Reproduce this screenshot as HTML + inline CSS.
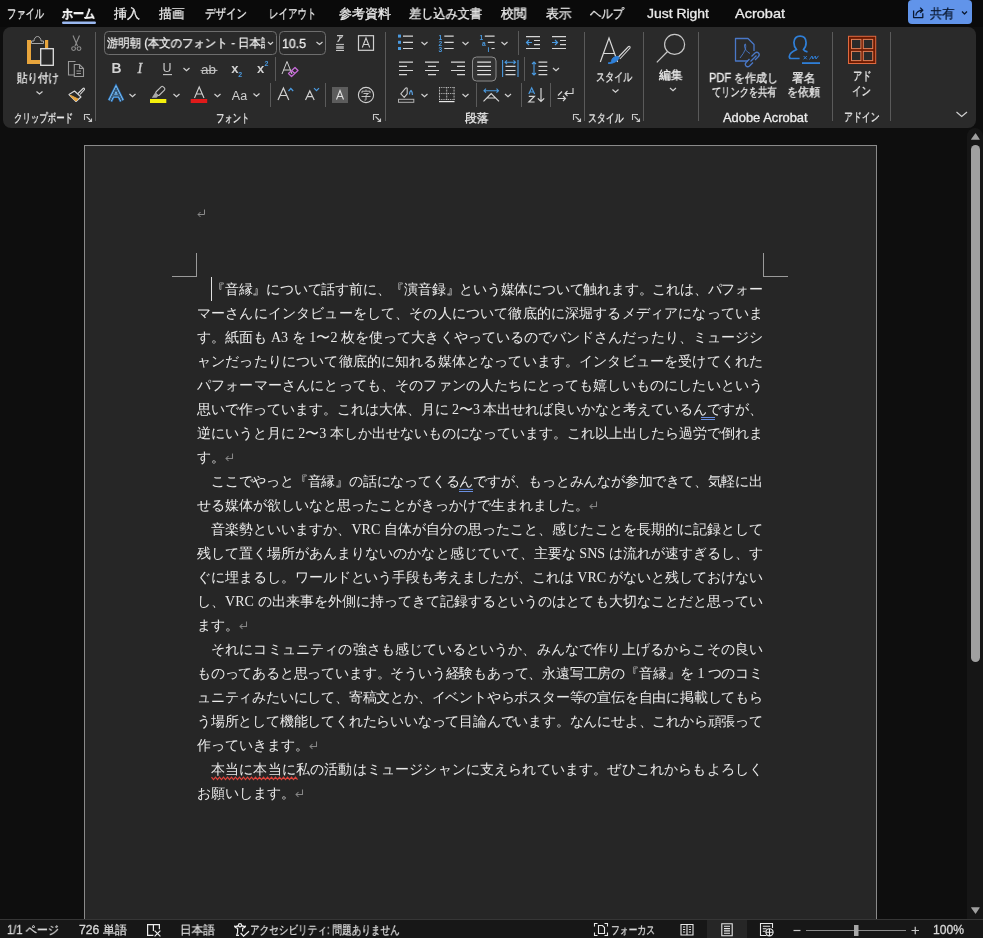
<!DOCTYPE html>
<html><head><meta charset="utf-8">
<style>
*{box-sizing:border-box}
html,body{margin:0;padding:0}
body{width:983px;height:938px;overflow:hidden;background:#0e0e0e;position:relative;font-family:"Liberation Sans",sans-serif;color:#e8e8e8}
.abs{position:absolute}
#tabs{left:0;top:0;width:983px;height:27px;background:#0a0a0a}
.tab{position:absolute;top:5px;font-size:13px;line-height:16px;color:#e6e6e6;white-space:nowrap}
#ribbon{left:3px;top:27px;width:973px;height:101px;background:#2a2a2a;border-radius:8px}
#page{left:84px;top:145px;width:793px;height:800px;background:#262626;border:1px solid #8a8a8a}
#sb{left:967px;top:128px;width:16px;height:791px;background:#161616;border-radius:8px 8px 0 0}
#status{left:0;top:919px;width:983px;height:19px;background:#171717;border-top:1px solid #363636}
.ln{will-change:transform;position:absolute;height:24px;line-height:24px;font-family:"Liberation Serif",serif;font-size:14px;color:#eaeaea;white-space:nowrap;}

.rm{display:inline-block;vertical-align:baseline;margin-left:0}
.t{will-change:transform;position:absolute;white-space:nowrap;transform-origin:0 0;color:#ececec;-webkit-text-stroke:0.3px currentColor}
#share{left:908px;top:0px;width:64px;height:24px;background:#6194ea;border-radius:4px}

</style></head><body>
<div id="tabs" class="abs"></div>
<div id="share" class="abs"></div>
<div id="ribbon" class="abs"></div>
<div id="page" class="abs"></div>
<div class="abs" style="left:172px;top:276px;width:25px;height:1px;background:#9a9a9a"></div>
<div class="abs" style="left:196px;top:253px;width:1px;height:24px;background:#9a9a9a"></div>
<div class="abs" style="left:763px;top:276px;width:25px;height:1px;background:#9a9a9a"></div>
<div class="abs" style="left:763px;top:253px;width:1px;height:24px;background:#9a9a9a"></div>
<svg class="abs" style="left:197px;top:209px" width="9" height="9" viewBox="0 0 9 9"><path d="M7.5 0.5V5.5H1M3.5 3L1 5.5L3.5 8" fill="none" stroke="#8a8a8a" stroke-width="1"/></svg>
<div class="abs" style="left:211px;top:277px;width:1px;height:24px;background:#e0e0e0"></div>
<div class="ln" style="top:277.5px;left:211px;letter-spacing:-0.2051px;width:551.80px;text-align:justify;text-align-last:justify">『音縁』について話す前に、『演音録』という媒体について触れます。これは、パフォー</div>
<div class="ln" style="top:301.5px;left:197px;letter-spacing:0.1538px;width:566.16px;text-align:justify;text-align-last:justify">マーさんにインタビューをして、その人について徹底的に深堀するメディアになっていま</div>
<div class="ln" style="top:325.5px;left:197px;letter-spacing:0.0653px;width:566.08px;text-align:justify;text-align-last:justify">す。紙面も A3 を 1〜2 枚を使って大きくやっているのでバンドさんだったり、ミュージシ</div>
<div class="ln" style="top:349.5px;left:197px;letter-spacing:0.1538px;width:566.16px;text-align:justify;text-align-last:justify">ャンだったりについて徹底的に知れる媒体となっています。インタビューを受けてくれた</div>
<div class="ln" style="top:373.5px;left:197px;letter-spacing:0.1538px;width:566.16px;text-align:justify;text-align-last:justify">パフォーマーさんにとっても、そのファンの人たちにとっても嬉しいものにしたいという</div>
<div class="ln" style="top:397.5px;left:197px;letter-spacing:-0.0238px;width:565.99px;text-align:justify;text-align-last:justify">思いで作っています。これは大体、月に 2〜3 本出せれば良いかなと考えているんですが、</div>
<div class="ln" style="top:421.5px;left:197px;letter-spacing:-0.0238px;width:565.99px;text-align:justify;text-align-last:justify">逆にいうと月に 2〜3 本しか出せないものになっています。これ以上出したら過労で倒れま</div>
<div class="ln" style="top:445.5px;left:197px">す。<svg class="rm" width="9" height="9" viewBox="0 0 9 9"><path d="M7.5 0.5V5.5H1M3.5 3L1 5.5L3.5 8" fill="none" stroke="#868686" stroke-width="1.05"/></svg></div>
<div class="ln" style="top:469.5px;left:211px;letter-spacing:-0.2051px;width:551.80px;text-align:justify;text-align-last:justify">ここでやっと『音縁』の話になってくるんですが、もっとみんなが参加できて、気軽に出</div>
<div class="ln" style="top:493.5px;left:197px">せる媒体が欲しいなと思ったことがきっかけで生まれました。<svg class="rm" width="9" height="9" viewBox="0 0 9 9"><path d="M7.5 0.5V5.5H1M3.5 3L1 5.5L3.5 8" fill="none" stroke="#868686" stroke-width="1.05"/></svg></div>
<div class="ln" style="top:517.5px;left:211px;letter-spacing:0.0426px;width:552.05px;text-align:justify;text-align-last:justify">音楽勢といいますか、VRC 自体が自分の思ったこと、感じたことを長期的に記録として</div>
<div class="ln" style="top:541.5px;left:197px;letter-spacing:0.0312px;width:566.04px;text-align:justify;text-align-last:justify">残して置く場所があんまりないのかなと感じていて、主要な SNS は流れが速すぎるし、す</div>
<div class="ln" style="top:565.5px;left:197px;letter-spacing:-0.0428px;width:565.97px;text-align:justify;text-align-last:justify">ぐに埋まるし。ワールドという手段も考えましたが、これは VRC がないと残しておけない</div>
<div class="ln" style="top:589.5px;left:197px;letter-spacing:0.0415px;width:566.05px;text-align:justify;text-align-last:justify">し、VRC の出来事を外側に持ってきて記録するというのはとても大切なことだと思ってい</div>
<div class="ln" style="top:613.5px;left:197px">ます。<svg class="rm" width="9" height="9" viewBox="0 0 9 9"><path d="M7.5 0.5V5.5H1M3.5 3L1 5.5L3.5 8" fill="none" stroke="#868686" stroke-width="1.05"/></svg></div>
<div class="ln" style="top:637.5px;left:211px;letter-spacing:0.1579px;width:552.17px;text-align:justify;text-align-last:justify">それにコミュニティの強さも感じているというか、みんなで作り上げるからこその良い</div>
<div class="ln" style="top:661.5px;left:197px;letter-spacing:-0.1905px;width:565.82px;text-align:justify;text-align-last:justify">ものってあると思っています。そういう経験もあって、永遠写工房の『音縁』を 1 つのコミ</div>
<div class="ln" style="top:685.5px;left:197px;letter-spacing:-0.2000px;width:565.81px;text-align:justify;text-align-last:justify">ュニティみたいにして、寄稿文とか、イベントやらポスター等の宣伝を自由に掲載してもら</div>
<div class="ln" style="top:709.5px;left:197px;letter-spacing:-0.2000px;width:565.81px;text-align:justify;text-align-last:justify">う場所として機能してくれたらいいなって目論んでいます。なんにせよ、これから頑張って</div>
<div class="ln" style="top:733.5px;left:197px">作っていきます。<svg class="rm" width="9" height="9" viewBox="0 0 9 9"><path d="M7.5 0.5V5.5H1M3.5 3L1 5.5L3.5 8" fill="none" stroke="#868686" stroke-width="1.05"/></svg></div>
<div class="ln" style="top:757.5px;left:211px;letter-spacing:0.1579px;width:552.17px;text-align:justify;text-align-last:justify">本当に本当に私の活動はミュージシャンに支えられています。ぜひこれからもよろしく</div>
<div class="ln" style="top:781.5px;left:197px">お願いします。<svg class="rm" width="9" height="9" viewBox="0 0 9 9"><path d="M7.5 0.5V5.5H1M3.5 3L1 5.5L3.5 8" fill="none" stroke="#868686" stroke-width="1.05"/></svg></div>
<svg class="abs" style="left:0;top:0" width="983" height="938" viewBox="0 0 983 938"><g fill="none">
<path d="M701 417.5H715M701 419.5H715M459 489.4H473M459 491.5H473" stroke="#6a8fe0" stroke-width="1"/>
<path d="M211.5 777.2L213.5 779.6L215.5 777.2L217.5 779.6L219.5 777.2L221.5 779.6L223.5 777.2L225.5 779.6L227.5 777.2L229.5 779.6L231.5 777.2L233.5 779.6L235.5 777.2L237.5 779.6L239.5 777.2L241.5 779.6L243.5 777.2L245.5 779.6L247.5 777.2L249.5 779.6L251.5 777.2L253.5 779.6L255.5 777.2L257.5 779.6L259.5 777.2L261.5 779.6L263.5 777.2L265.5 779.6L267.5 777.2L269.5 779.6L271.5 777.2L273.5 779.6L275.5 777.2L277.5 779.6L279.5 777.2L281.5 779.6L283.5 777.2L285.5 779.6L287.5 777.2L289.5 779.6L291.5 777.2L293.5 779.6L295.5 777.2L297.5 779.6" stroke="#e0443c" stroke-width="1.25"/>
</g></svg>
<div id="sb" class="abs"></div>
<div id="status" class="abs"></div>
<svg class="abs" style="left:0;top:0" width="983" height="938" viewBox="0 0 983 938">
<g fill="none" stroke-linecap="butt">
<!-- separators -->
<g stroke="#5a5a5a" stroke-width="1">
<path d="M95.5 32V121M385.5 32V121M584.5 32V121M643.5 32V121M698.5 32V121M832.5 32V121M890.5 32V121"/>
<path d="M275.5 57V81M270.5 83V107M325.5 83V107M518.5 31V55M524.5 57V81M476.5 83V107M521.5 83V107M550.5 83V107"/>
</g>
<!-- share button icon and chevron -->
<g stroke="#0a1830" stroke-width="1.25" stroke-linejoin="round">
<path d="M913.6 10.4V17.6H922.8V13.2"/>
<path d="M915.8 15.6Q916.4 10.6 922.6 10.2M920.2 7.6L922.8 10.2L920.2 12.8"/>
<path d="M962 11.5L964.5 14L967 11.5"/>
</g>
<!-- Paste -->
<path d="M27 40H31V43.5H31V60H40V64H27Z M45 40H48.2V48H45Z" fill="#e8a53c" stroke="none"/>
<path d="M31.5 43.5H43.5V41H41C41 38.5 39.5 36.5 37.5 36.5S34 38.5 34 41H31.5Z" stroke="#a8a8a8" stroke-width="1"/>
<rect x="40.7" y="48.7" width="12.6" height="16.6" fill="#2a2a2a" stroke="#e2e2e2" stroke-width="1.3"/>
<path d="M36.5 91.5L39.5 94L42.5 91.5" stroke="#d0d0d0" stroke-width="1.2"/>
<!-- scissors -->
<g stroke="#8e8e8e" stroke-width="1.1">
<path d="M73 35.5L77.5 46M79.5 35.5L75 46"/>
<circle cx="73.6" cy="48.6" r="1.9"/><circle cx="79" cy="48.6" r="1.9"/>
</g>
<!-- copy -->
<g stroke="#9a9a9a" stroke-width="1.1">
<path d="M75.5 61.5H68.5V75H74"/>
<path d="M74.3 64.5H79.5L83.5 68.5V76.5H74.3Z M79.5 64.5V68.5H83.5 M76.5 71H81M76.5 73.5H81"/>
</g>
<!-- format painter -->
<path d="M69 94.5L74.5 91L81 97L76 101.5Z" stroke="#d8d8d8" stroke-width="1.1" stroke-linejoin="round"/>
<path d="M70 95.5L76 101L78 99L72 96Z" fill="#e8a53c" stroke="#e8a53c" stroke-width="1"/>
<path d="M78 93.5L83 88.5Q84.5 87.5 84.5 89.5L80 94.5" stroke="#d8d8d8" stroke-width="1.1"/>
<!-- launchers -->
<g stroke="#c8c8c8" stroke-width="1.1">
<path d="M84.5 120V114.5H90M86.5 116.5L91.5 121.5M88.5 121.5H91.5V118.5"/>
<path d="M373.5 120V114.5H379M375.5 116.5L380.5 121.5M377.5 121.5H380.5V118.5"/>
<path d="M573.5 120V114.5H579M575.5 116.5L580.5 121.5M577.5 121.5H580.5V118.5"/>
<path d="M632.5 120V114.5H638M634.5 116.5L639.5 121.5M636.5 121.5H639.5V118.5"/>
</g>
<!-- font boxes -->
<rect x="104.5" y="31.5" width="172" height="23" rx="4" stroke="#6e6e6e" stroke-width="1"/>
<rect x="279.5" y="31.5" width="46" height="23" rx="4" stroke="#6e6e6e" stroke-width="1"/>
<!-- chevrons -->
<g stroke="#d0d0d0" stroke-width="1.2">
<path d="M268 42L270.5 44.5L273 42M316.5 42L319.5 44.5L322.5 42"/>
<path d="M183.5 68L186.5 70.8L189.5 68"/>
<path d="M129.5 94L132.5 96.8L135.5 94M173.5 94L176.5 96.8L179.5 94M214.5 94L217.5 96.8L220.5 94M253.5 93.5L256.5 96.3L259.5 93.5"/>
<path d="M421.5 42L424.5 44.8L427.5 42M462.5 42L465.5 44.8L468.5 42M501.5 42L504.5 44.8L507.5 42M553 68L556 70.8L559 68"/>
<path d="M421.5 94L424.5 96.8L427.5 94M462.5 94L465.5 96.8L468.5 94M505 94L508 96.8L511 94"/>
<path d="M612.5 89.5L615.5 92.3L618.5 89.5M670 88L673 90.8L676 88"/>
<path d="M956.5 112L961.7 116.5L967 112"/>
</g>
<!-- ruby icon -->
<g stroke="#c8c8c8" stroke-width="1.1">
<path d="M337 35.6H342.6Q342 37.5 340.4 38.3M340 36.5Q340.2 40 337.5 41.8"/>
<path d="M336 44.4H344M336 50.5H344" stroke-width="1"/>
</g>
<rect x="336.2" y="45.9" width="7.6" height="3.2" fill="#9a9a9a" stroke="none"/>
<!-- enclosed A -->
<rect x="358.5" y="35.7" width="15" height="14.6" stroke="#d0d0d0" stroke-width="1.2"/>
<path d="M362.3 47.5L366 38L369.7 47.5M363.5 44.5H368.5" stroke="#d0d0d0" stroke-width="1.1"/>
<!-- U underline -->
<path d="M163 74.6H172" stroke="#c8c8c8" stroke-width="1.1"/>
<!-- strikethrough -->
<path d="M200.5 70.4H217.5" stroke="#c8c8c8" stroke-width="1"/>
<!-- clear formatting -->
<path d="M282 74L287 61.5L292 74M283.5 70H290.5" stroke="#d0d0d0" stroke-width="1"/>
<path d="M288.5 73.5L295 67.5L298 70.5L291.5 76.5Z M291.7 70.5L294.7 73.5" stroke="#c56bd6" stroke-width="1.3" stroke-linejoin="round"/>
<!-- text effects A -->
<g stroke-linejoin="miter" stroke-linecap="butt">
<path d="M110 100.8L116 88.8L122 100.8M112.8 95.6H119.2" stroke="#2a78c8" stroke-width="5"/>
<path d="M110 100.8L116 88.8L122 100.8M112.8 95.6H119.2" stroke="#86c4f2" stroke-width="3.4"/>
<path d="M110 100.8L116 88.8L122 100.8M112.8 95.6H119.2" stroke="#0c2846" stroke-width="1.6"/>
<path d="M110 100.8L116 88.8L122 100.8M112.8 95.6H119.2" stroke="#8cbce6" stroke-width="0.4"/>
</g>
<!-- highlighter -->
<rect x="155.3" y="88.6" width="10" height="4.6" rx="1.5" transform="rotate(-45 160.3 90.9)" stroke="#c0c0c0" stroke-width="1.1"/>
<path d="M155.2 92.6L158.4 95.8L156.5 97.8H151.8Z" fill="#a8a8a8" stroke="none"/>
<rect x="150" y="99" width="16.3" height="4" fill="#f4f00c" stroke="none"/>
<!-- font color -->
<path d="M194.5 98L199.2 87L204 98M196.2 94H202.3" stroke="#d0d0d0" stroke-width="1.1"/>
<rect x="190.7" y="99" width="16.5" height="4" fill="#e01a1a" stroke="none"/>
<!-- A^ A v -->
<path d="M278 100L283.4 88L288.8 100M280 95.5H286.8" stroke="#d0d0d0" stroke-width="1.2"/>
<path d="M288.5 91L290.8 88.5L293.2 91" stroke="#4a9ae0" stroke-width="1.2"/>
<path d="M305.5 100L309.8 91L314.2 100M307 96.7H312.7" stroke="#d0d0d0" stroke-width="1.2"/>
<path d="M314 88.2L316.5 90.7L319 88.2" stroke="#4a9ae0" stroke-width="1.2"/>
<!-- shaded A -->
<rect x="332" y="87" width="16" height="16" fill="#5c5c5c" stroke="none"/>
<path d="M336.5 99.5L340 90.5L343.5 99.5M337.7 96.5H342.3" stroke="#e2e2e2" stroke-width="1.1"/>
<!-- enclosed char -->
<circle cx="366" cy="95" r="7.6" stroke="#d0d0d0" stroke-width="1.1"/>
<path d="M366 89.5V90.7M362 93.2V91.2H370V93.2M363.5 93.5H368.5L366 95.3V99.5Q366 100.5 364.5 100M361.5 96.5H370.5" stroke="#d0d0d0" stroke-width="0.9"/>
<!-- bullets -->
<g fill="#4a9ae0" stroke="none">
<rect x="398" y="34.6" width="3" height="3"/><rect x="398" y="40.8" width="3" height="3"/><rect x="398" y="47" width="3" height="3"/>
</g>
<g stroke="#d6d6d6" stroke-width="1.2">
<path d="M403 36.2H413M403 42.3H413M403 48.5H413"/>
<path d="M444.3 36.2H453.7M444.3 42.3H453.7M444.3 48.5H453.7"/>
<path d="M484.8 36.2H494.6M487.8 42.3H494.6M491.5 48.5H494.6"/>
</g>
<g fill="#4a9ae0" stroke="none" font-family="Liberation Sans" font-weight="bold" font-size="6.6">
<text x="438.6" y="39.6">1</text><text x="438.4" y="45.6">2</text><text x="438.4" y="51.6">3</text>
<text x="479.6" y="39.6">1</text><text x="482" y="45.6">a</text><text x="487.6" y="51.6">i</text>
</g>
<!-- indent -->
<g stroke="#d6d6d6" stroke-width="1.2">
<path d="M526 36.6H540M534 40.5H540M534 44.6H540M526 48.5H540"/>
<path d="M552 36.6H566M560 40.5H566M560 44.6H566M552 48.5H566"/>
</g>
<g stroke="#4a9ae0" stroke-width="1.2">
<path d="M532 42.5H526.5M529 40L526.5 42.5L529 45"/>
<path d="M552 42.5H557.5M555 40L557.5 42.5L555 45"/>
</g>
<!-- align -->
<g stroke="#d6d6d6" stroke-width="1.2">
<path d="M399 62.2H413M399 66.4H407M399 70.5H413M399 74.6H407"/>
<path d="M425 62.2H439M428 66.4H436M425 70.5H439M428 74.6H436"/>
<path d="M451 62.2H465M457 66.4H465M451 70.5H465M457 74.6H465"/>
</g>
<rect x="472.5" y="57" width="23.5" height="24" rx="4" fill="#333333" stroke="#8c8c8c" stroke-width="1"/>
<path d="M477.2 62.2H491M477.2 66.4H491M477.2 70.5H491M477.2 74.6H491" stroke="#e0e0e0" stroke-width="1.2"/>
<path d="M505.5 66.4H515.5M505.5 70.5H515.5M505.5 74.6H515.5" stroke="#d6d6d6" stroke-width="1.2"/>
<path d="M502.6 60V77M518 60V77M505 62.2H515.5M507 60.3L505 62.2L507 64.1M513.5 60.3L515.5 62.2L513.5 64.1" stroke="#4a9ae0" stroke-width="1.1"/>
<!-- line spacing -->
<path d="M538.5 62.2H547.3M538.5 66.4H547.3M538.5 70.5H547.3M538.5 74.6H547.3" stroke="#d6d6d6" stroke-width="1.2"/>
<path d="M534 62V75M532 64L534 62L536 64M532 73L534 75L536 73" stroke="#4a9ae0" stroke-width="1.1"/>
<!-- shading -->
<path d="M400.8 93.8L405.6 88.2Q406.4 87.4 407.2 88.2V93.8L404.2 97.3Z" stroke="#c8c8c8" stroke-width="1.1" stroke-linejoin="round"/>
<path d="M409.5 94.5Q409.5 91.5 411 90.5Q412.6 92 412.4 95" stroke="#5aa0e0" stroke-width="1.2"/>
<rect x="398.5" y="99.3" width="15.3" height="3" stroke="#b0b0b0" stroke-width="1"/>
<!-- borders -->
<g fill="#d0d0d0" stroke="none">
<rect x="439.00" y="87" width="0.9" height="0.9"/><rect x="439.00" y="99" width="0.9" height="0.9"/><rect x="440.82" y="87" width="0.9" height="0.9"/><rect x="440.82" y="99" width="0.9" height="0.9"/><rect x="442.64" y="87" width="0.9" height="0.9"/><rect x="442.64" y="99" width="0.9" height="0.9"/><rect x="444.46" y="87" width="0.9" height="0.9"/><rect x="444.46" y="99" width="0.9" height="0.9"/><rect x="446.28" y="87" width="0.9" height="0.9"/><rect x="446.28" y="99" width="0.9" height="0.9"/><rect x="448.10" y="87" width="0.9" height="0.9"/><rect x="448.10" y="99" width="0.9" height="0.9"/><rect x="449.92" y="87" width="0.9" height="0.9"/><rect x="449.92" y="99" width="0.9" height="0.9"/><rect x="451.74" y="87" width="0.9" height="0.9"/><rect x="451.74" y="99" width="0.9" height="0.9"/><rect x="453.56" y="87" width="0.9" height="0.9"/><rect x="453.56" y="99" width="0.9" height="0.9"/><rect x="439" y="87.00" width="0.9" height="0.9"/><rect x="453.6" y="87.00" width="0.9" height="0.9"/><rect x="446.3" y="87.00" width="0.9" height="0.9"/><rect x="439" y="88.50" width="0.9" height="0.9"/><rect x="453.6" y="88.50" width="0.9" height="0.9"/><rect x="446.3" y="88.50" width="0.9" height="0.9"/><rect x="439" y="90.00" width="0.9" height="0.9"/><rect x="453.6" y="90.00" width="0.9" height="0.9"/><rect x="446.3" y="90.00" width="0.9" height="0.9"/><rect x="439" y="91.50" width="0.9" height="0.9"/><rect x="453.6" y="91.50" width="0.9" height="0.9"/><rect x="446.3" y="91.50" width="0.9" height="0.9"/><rect x="439" y="93.00" width="0.9" height="0.9"/><rect x="453.6" y="93.00" width="0.9" height="0.9"/><rect x="446.3" y="93.00" width="0.9" height="0.9"/><rect x="439" y="94.50" width="0.9" height="0.9"/><rect x="453.6" y="94.50" width="0.9" height="0.9"/><rect x="446.3" y="94.50" width="0.9" height="0.9"/><rect x="439" y="96.00" width="0.9" height="0.9"/><rect x="453.6" y="96.00" width="0.9" height="0.9"/><rect x="446.3" y="96.00" width="0.9" height="0.9"/><rect x="439" y="97.50" width="0.9" height="0.9"/><rect x="453.6" y="97.50" width="0.9" height="0.9"/><rect x="446.3" y="97.50" width="0.9" height="0.9"/><rect x="439" y="99.00" width="0.9" height="0.9"/><rect x="453.6" y="99.00" width="0.9" height="0.9"/><rect x="446.3" y="99.00" width="0.9" height="0.9"/><rect x="439.00" y="93" width="0.9" height="0.9"/><rect x="440.82" y="93" width="0.9" height="0.9"/><rect x="442.64" y="93" width="0.9" height="0.9"/><rect x="444.46" y="93" width="0.9" height="0.9"/><rect x="446.28" y="93" width="0.9" height="0.9"/><rect x="448.10" y="93" width="0.9" height="0.9"/><rect x="449.92" y="93" width="0.9" height="0.9"/><rect x="451.74" y="93" width="0.9" height="0.9"/><rect x="453.56" y="93" width="0.9" height="0.9"/>
</g>
<path d="M439 101.6H454.5" stroke="#e8e8e8" stroke-width="1.2"/>
<!-- asian layout -->
<path d="M484 90.7H498.5M486 88.7L484 90.7L486 92.7M496.5 88.7L498.5 90.7L496.5 92.7" stroke="#4a9ae0" stroke-width="1.1"/>
<path d="M483.5 101.3L491.2 93.5L499 101.3M487 98H495.5" stroke="#d6d6d6" stroke-width="1.2"/>
<!-- sort -->
<path d="M528.8 94L531.7 87.8L534.6 94M529.8 92H533.6" stroke="#4a9ae0" stroke-width="1.2"/>
<path d="M528.8 96.3H534.4L528.8 102H534.6" stroke="#d6d6d6" stroke-width="1.2"/>
<path d="M541 88V101.5M537.8 98.3L541 101.5L544.2 98.3" stroke="#d6d6d6" stroke-width="1.2"/>
<!-- show/hide -->
<path d="M573 88V93.5H565M567.5 91L565 93.5L567.5 96M557.5 98.5H565.5M563 96L565.5 98.5L563 101M562 91.5L558 95.5" stroke="#d6d6d6" stroke-width="1.1"/>
<!-- styles icon -->
<path d="M600.3 62L609 38L617.6 62M603.5 53.5H614.5" stroke="#d8d8d8" stroke-width="1.2"/>
<path d="M618 57.5L628.5 46.5Q630.5 45.8 630 48L619.8 59" stroke="#d8d8d8" stroke-width="1.1"/>
<path d="M609 63.5Q613 63.5 616 61.5Q620 58 618.8 57Q617 55.5 613.5 57.5Q611.5 59 611.5 61.5Q610.5 63 608 63Z" fill="#2f80d8" stroke="#2f80d8" stroke-width="1"/>
<!-- search -->
<circle cx="674.6" cy="44.4" r="10" stroke="#c8c8c8" stroke-width="1.2"/>
<path d="M667.5 51.5L656.8 62.3" stroke="#c8c8c8" stroke-width="1.2"/>
<!-- pdf link -->
<g stroke="#4a78c8" stroke-width="1.3" stroke-linejoin="round">
<path d="M748 61H735.5V38.5H748L754 44.5V51"/>
<path d="M740 58Q744 53 745.5 49Q746 46 745.5 44Q744.5 43.5 744.5 46Q745 51 750 53.5" stroke-width="0.9"/>
<path d="M751.5 56.5L755 53Q757 51.5 758.5 53Q760 54.5 758.5 56.5L755 60M753 62.5L749.5 66Q747.5 67.5 746 66Q744.5 64.5 746 62.5L749.5 59M750.5 61.5L756.5 55.5"/>
</g>
<!-- signature -->
<g stroke="#2f7fd8" stroke-width="1.7" stroke-linejoin="round">
<path d="M799.6 58.5H791Q789.3 58.5 789.3 56.5Q789.6 52.5 796.6 49.5Q793.8 46.5 793.9 42.5Q794.4 36.2 800.1 36.2Q805.8 36.2 806.1 42.5Q806.1 47 803.4 49.5Q804.6 51.2 807.5 51.8"/>
<path d="M802 63.1H820" stroke-width="1.8"/>
<path d="M803.6 56L806.8 59.3M806.8 56L803.6 59.3M809.5 59.5L812 56L812.8 59L815.3 56L816 59L818.5 55.8" stroke-width="1"/>
</g>
<!-- add-in -->
<rect x="848.5" y="36.3" width="27.2" height="27.2" fill="#6e1a00" stroke="#e06a40" stroke-width="1"/>
<g fill="#2a2a2a" stroke="#e08058" stroke-width="1">
<rect x="851.5" y="39.4" width="9.4" height="9.2"/><rect x="863.3" y="39.4" width="9.4" height="9.2"/>
<rect x="851.5" y="51.4" width="9.4" height="9.2"/><rect x="863.3" y="51.4" width="9.4" height="9.2"/>
</g>
</g>
<!-- glyph texts -->
<g stroke="none" font-family="Liberation Sans">
<text x="111.6" y="72.8" font-size="13.8" font-weight="bold" fill="#d2d2d2">B</text>
<text x="137.6" y="73" font-size="14.5" font-style="italic" font-family="Liberation Serif" fill="#cfcfcf" stroke="#cfcfcf" stroke-width="0.3">I</text>
<text x="162.4" y="72" font-size="12.5" fill="#c8c8c8">U</text>
<text x="201" y="73.7" font-size="13.5" fill="#c8c8c8">ab</text>
<text x="231.2" y="73" font-size="13" font-weight="bold" fill="#d2d2d2">x</text>
<text x="238.3" y="77" font-size="7" font-weight="bold" fill="#4a9ae0">2</text>
<text x="257" y="73" font-size="13" font-weight="bold" fill="#d2d2d2">x</text>
<text x="264.4" y="66.3" font-size="7" font-weight="bold" fill="#4a9ae0">2</text>
<text x="231.8" y="99.6" font-size="12.5" fill="#d0d0d0">Aa</text>
</g>
<rect x="62" y="21.6" width="34" height="2.4" rx="1.2" fill="#9ab8f0" stroke="none"/>
<!-- scrollbar -->
<g stroke="none" fill="#a0a0a0">
<path d="M975.4 133.3Q975.6 133 975.9 133.4L979.7 139.2Q979.9 139.7 979.4 139.7H971.4Q970.9 139.7 971.1 139.2Z"/>
<rect x="971" y="145" width="9" height="517" rx="4.5"/>
<path d="M975.4 913.7Q975.6 914 975.9 913.6L979.7 907.8Q979.9 907.3 979.4 907.3H971.4Q970.9 907.3 971.1 907.8Z"/>
</g>
<!-- status icons -->
<rect x="707" y="920" width="40" height="18" fill="#262626" stroke="none"/>
<g stroke="#e8e8e8" stroke-width="1.1" fill="none">
<g stroke="#eeeeee" stroke-width="1.2">
<path d="M153.4 935.4H147.6V924.6H153.4V931 M153.4 924.6H159.4V929.3"/>
<path d="M154.6 930.6L160.4 936.4M160.4 930.6L154.6 936.4"/>
<circle cx="240" cy="925.2" r="1.6"/>
<path d="M238.4 925.6Q236 926.8 234.6 926.2Q234.3 927.4 237.6 928.3V932.5L236.7 935.4H239 M241.6 925.6Q244 926.8 245.4 926.2Q245.7 927.4 242.6 928.3V931.5"/>
<path d="M240.6 933L243.6 936.2L249 931.2"/>
</g>
<path d="M594.5 926.5V923.5H597.5M604.5 923.5H607.5V926.5M607.5 932.5V935.5H604.5M597.5 935.5H594.5V932.5"/>
<path d="M598.5 925.5H602.5L604.5 927.5V933.5H598.5Z"/>
<path d="M681 924.5H687V935H681Z M687 924.5H693V935H687Z M683 927H685.2M683 929.5H685.2M683 932H685.2M688.8 927H691M688.8 929.5H691M688.8 932H691"/>
<path d="M721.8 923.8H732.2V935.8H721.8Z M724 926.3H730M724 928.6H730M724 930.9H730M724 933.2H730"/>
<path d="M766.5 935.5H760.5V923.5H772.5V928 M762.8 926.3H770.2M762.8 928.8H766.5M762.8 931.3H765.5"/>
<circle cx="769.5" cy="932.3" r="3.6" fill="#171717"/>
<path d="M765.9 932.3H773.1M769.5 928.7V935.9"/>
</g>
<g stroke="#c8c8c8" fill="none">
<path d="M793.5 930.5H800.5" stroke-width="1.2"/>
<path d="M806 930.5H906" stroke="#8a8a8a" stroke-width="1"/>
<path d="M911.5 930.5H919M915.25 926.8V934.2" stroke-width="1.2"/>
</g>
<rect x="854" y="925" width="4.5" height="11" fill="#a8a8a8" stroke="none"/>
</svg>

<span class="t" style="left:7px;top:7px;font-size:13px;line-height:13px;transform:scaleX(0.7115)">ファイル</span>
<span class="t" style="left:62px;top:7px;font-size:13px;line-height:13px;font-weight:bold;color:#f2f2f2;transform:scaleX(0.8462)">ホーム</span>
<span class="t" style="left:114px;top:7px;font-size:13px;line-height:13px;transform:scaleX(1.0000)">挿入</span>
<span class="t" style="left:159px;top:7px;font-size:13px;line-height:13px;transform:scaleX(0.9808)">描画</span>
<span class="t" style="left:205px;top:7px;font-size:13px;line-height:13px;transform:scaleX(0.8077)">デザイン</span>
<span class="t" style="left:268.5px;top:7px;font-size:13px;line-height:13px;transform:scaleX(0.7308)">レイアウト</span>
<span class="t" style="left:338.5px;top:7px;font-size:13px;line-height:13px;transform:scaleX(1.0000)">参考資料</span>
<span class="t" style="left:409px;top:7px;font-size:13px;line-height:13px;transform:scaleX(0.9359)">差し込み文書</span>
<span class="t" style="left:501px;top:7px;font-size:13px;line-height:13px;transform:scaleX(0.9808)">校閲</span>
<span class="t" style="left:545.6px;top:7px;font-size:13px;line-height:13px;transform:scaleX(0.9808)">表示</span>
<span class="t" style="left:590px;top:7px;font-size:13px;line-height:13px;transform:scaleX(0.8718)">ヘルプ</span>
<span class="t" style="left:647px;top:6.5px;font-size:13px;line-height:13px;transform:scaleX(1.0724)">Just Right</span>
<span class="t" style="left:735px;top:6.5px;font-size:13px;line-height:13px;transform:scaleX(1.1158)">Acrobat</span>
<span class="t" style="left:929.5px;top:6.5px;font-size:13px;line-height:13px;color:#0a1830;transform:scaleX(0.9423)">共有</span>
<span class="t" style="left:17px;top:72px;font-size:12px;line-height:12px;transform:scaleX(0.8750)">貼り付け</span>
<span class="t" style="left:14px;top:112px;font-size:12px;line-height:12px;transform:scaleX(0.7024)">クリップボード</span>
<span class="t" style="left:216px;top:112px;font-size:12px;line-height:12px;transform:scaleX(0.6979)">フォント</span>
<span class="t" style="left:465px;top:112px;font-size:12px;line-height:12px;transform:scaleX(0.9833)">段落</span>
<span class="t" style="left:595.7px;top:70.8px;font-size:12px;line-height:12px;transform:scaleX(0.7562)">スタイル</span>
<span class="t" style="left:587.8px;top:112px;font-size:12px;line-height:12px;transform:scaleX(0.7417)">スタイル</span>
<span class="t" style="left:659px;top:69px;font-size:12px;line-height:12px;transform:scaleX(0.9833)">編集</span>
<span class="t" style="left:709px;top:72px;font-size:12px;line-height:12px;transform:scaleX(0.9211)">PDF を作成し</span>
<span class="t" style="left:711.7px;top:86px;font-size:12px;line-height:12px;transform:scaleX(0.7690)">てリンクを共有</span>
<span class="t" style="left:792px;top:71.5px;font-size:12px;line-height:12px;transform:scaleX(0.9792)">署名</span>
<span class="t" style="left:786.8px;top:86px;font-size:12px;line-height:12px;transform:scaleX(0.9222)">を依頼</span>
<span class="t" style="left:723px;top:111.5px;font-size:12px;line-height:12px;transform:scaleX(1.0745)">Adobe Acrobat</span>
<span class="t" style="left:852.5px;top:70.2px;font-size:12px;line-height:12px;transform:scaleX(0.7708)">アド</span>
<span class="t" style="left:852px;top:85px;font-size:12px;line-height:12px;transform:scaleX(0.7917)">イン</span>
<span class="t" style="left:844px;top:111px;font-size:12px;line-height:12px;transform:scaleX(0.7417)">アドイン</span>
<div class="abs" style="left:105px;top:32px;width:160px;height:22px;overflow:hidden"><span class="t" style="left:2px;top:5px;font-size:12px;line-height:12px;transform:scaleX(0.95)">游明朝 (本文のフォント - 日本語)</span></div>
<span class="t" style="left:282.4px;top:37px;font-size:13px;line-height:13px;transform:scaleX(0.9521)">10.5</span>
<span class="t" style="left:7px;top:923.5px;font-size:12px;line-height:12px;color:#d8d8d8;transform:scaleX(0.9283)">1/1 ページ</span>
<span class="t" style="left:79.3px;top:923.5px;font-size:12px;line-height:12px;color:#d8d8d8;transform:scaleX(1.0135)">726 単語</span>
<span class="t" style="left:179.8px;top:923.5px;font-size:12px;line-height:12px;color:#d8d8d8;transform:scaleX(0.9722)">日本語</span>
<span class="t" style="left:250px;top:923.5px;font-size:12px;line-height:12px;color:#d8d8d8;transform:scaleX(0.8009)">アクセシビリティ: 問題ありません</span>
<span class="t" style="left:611px;top:923.5px;font-size:12px;line-height:12px;color:#d8d8d8;transform:scaleX(0.7333)">フォーカス</span>
<span class="t" style="left:933px;top:923.5px;font-size:12px;line-height:12px;color:#d8d8d8;transform:scaleX(1.0097)">100%</span>
</body></html>
